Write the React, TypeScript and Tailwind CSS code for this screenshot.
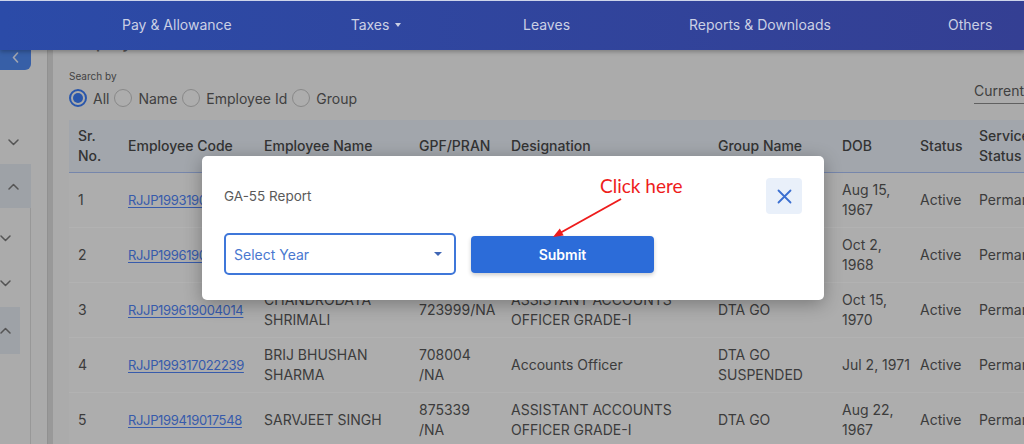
import React from "react";

type Row = {
  n: string;
  code: string;
  name: string[];
  gpf: string[];
  desig: string[];
  group: string[];
  dob: string[];
};

const rows: Row[] = [
  { n: "1", code: "RJJP199319006027", name: ["RAJENDRA", "PRASAD"], gpf: ["712345", "/NA"], desig: ["ACCOUNTS OFFICER"], group: ["DTA GO"], dob: ["Aug 15,", "1967"] },
  { n: "2", code: "RJJP199619003987", name: ["MAHESH", "KUMAR"], gpf: ["719902", "/NA"], desig: ["ACCOUNTS OFFICER"], group: ["DTA GO"], dob: ["Oct 2,", "1968"] },
  { n: "3", code: "RJJP199619004014", name: ["CHANDRODAYA", "SHRIMALI"], gpf: ["723999/NA"], desig: ["ASSISTANT ACCOUNTS", "OFFICER GRADE-I"], group: ["DTA GO"], dob: ["Oct 15,", "1970"] },
  { n: "4", code: "RJJP199317022239", name: ["BRIJ BHUSHAN", "SHARMA"], gpf: ["708004", "/NA"], desig: ["Accounts Officer"], group: ["DTA GO", "SUSPENDED"], dob: ["Jul 2, 1971"] },
  { n: "5", code: "RJJP199419017548", name: ["SARVJEET SINGH"], gpf: ["875339", "/NA"], desig: ["ASSISTANT ACCOUNTS", "OFFICER GRADE-I"], group: ["DTA GO"], dob: ["Aug 22,", "1967"] },
];

function Lines({ lines }: { lines: string[] }) {
  return (
    <div className="flex flex-col leading-[20px]">
      {lines.map((l, i) => (
        <span key={i} className="whitespace-nowrap">
          {l}
        </span>
      ))}
    </div>
  );
}

function ChevronDown() {
  return (
    <svg width="11" height="7" viewBox="0 0 11 7" fill="none">
      <path d="M1 1L5.5 5.5L10 1" stroke="#7a7a7a" strokeWidth="1.5" strokeLinecap="round" strokeLinejoin="round" />
    </svg>
  );
}
function ChevronUp() {
  return (
    <svg width="11" height="7" viewBox="0 0 11 7" fill="none">
      <path d="M1 6L5.5 1.5L10 6" stroke="#7a7a7a" strokeWidth="1.5" strokeLinecap="round" strokeLinejoin="round" />
    </svg>
  );
}

function Radio({ checked, label }: { checked?: boolean; label: string }) {
  return (
    <div className="flex items-center gap-[6px]">
      {checked ? (
        <span className="w-[18px] h-[18px] rounded-full border-2 border-[#3b7cf5] flex items-center justify-center">
          <span className="w-[10px] h-[10px] rounded-full bg-[#3b7cf5]" />
        </span>
      ) : (
        <span className="w-[18px] h-[18px] rounded-full border-[1.5px] border-[#c4c4c4] bg-[#f8f8f8]" />
      )}
      <span className="text-[14px] text-[#5c5c5c]">{label}</span>
    </div>
  );
}

const W = ["w-[49px]", "w-[136px]", "w-[155px]", "w-[92px]", "w-[207px]", "w-[124px]", "w-[78px]", "w-[59px]", "w-[120px]"];

export default function App() {
  return (
    <div className="relative w-[1024px] h-[444px] overflow-hidden bg-[#f5f5f5] font-[Inter,sans-serif]">
      {/* Page body */}
      <div className="flex h-full">
        {/* Sidebar */}
        <div className="w-[47px] shrink-0 flex flex-col">
          <div className="h-[40px]" />
          <div className="w-[31px] h-[30px] rounded-br-md rounded-tr-md bg-[#5089f0] flex items-center justify-center pt-[4px]">
            <svg width="7" height="11" viewBox="0 0 7 11" fill="none">
              <path d="M5.5 1L1.5 5.5L5.5 10" stroke="#e8eefc" strokeWidth="1.6" strokeLinecap="round" strokeLinejoin="round" />
            </svg>
          </div>
          <div className="h-[50px]" />
          <div className="h-[44px] flex items-center pl-[8px]">
            <ChevronDown />
          </div>
          <div className="h-[44px] w-[31px] bg-[#e3e8ef] flex items-center pl-[8px]">
            <ChevronUp />
          </div>
          <div className="flex-1 w-[31px] border-r border-[#dadada] flex flex-col">
            <div className="h-[8px]" />
            <div className="h-[44px] flex items-center">
              <ChevronDown />
            </div>
            <div className="h-[47px] flex items-center">
              <ChevronDown />
            </div>
            <div className="h-[47px] w-[20px] bg-[#e3e8ef] flex items-center">
              <ChevronUp />
            </div>
          </div>
        </div>
        <div className="w-[6px] shrink-0 bg-[#dcdcdc] border-l border-[#d0d0d0]" />

        {/* Content */}
        <div className="flex-1 min-w-0 overflow-hidden pl-[16px] pt-[30px]">
          <div className="h-[24px] leading-[24px] text-[18px] text-[#7a7a7a] font-medium">Employee List</div>
          <div className="flex items-start">
            <div className="flex flex-col">
              <div className="mt-[15px] text-[10px] leading-[14px] text-[#616161]">Search by</div>
              <div className="mt-[5px] h-[20px] flex items-center gap-[5px]">
                <Radio checked label="All" />
                <Radio label="Name" />
                <Radio label="Employee Id" />
                <Radio label="Group" />
              </div>
            </div>
            <div className="ml-auto -mr-[100px] w-[150px] shrink-0 mt-[28px] border-b-[1.5px] border-[#8a8a8a] pb-[3px] text-[14px] leading-[18px] text-[#5c5c5c] whitespace-nowrap">
              Current Employees
            </div>
          </div>

          {/* Table */}
          <div className="mt-[12px] w-[1020px]">
            <div className="flex h-[53px] items-center bg-[#e8eef7] border-b border-[#a9c1f5] text-[14px] font-medium text-[#4a4a4a] leading-[20px]">
              <div className={`${W[0]} pl-[9px]`}>
                <Lines lines={["Sr.", "No."]} />
              </div>
              <div className={`${W[1]} pl-[10px]`}>Employee Code</div>
              <div className={`${W[2]} pl-[10px]`}>Employee Name</div>
              <div className={`${W[3]} pl-[10px]`}>GPF/PRAN</div>
              <div className={`${W[4]} pl-[10px]`}>Designation</div>
              <div className={`${W[5]} pl-[10px]`}>Group Name</div>
              <div className={`${W[6]} pl-[10px]`}>DOB</div>
              <div className={`${W[7]} pl-[10px]`}>Status</div>
              <div className={`${W[8]} pl-[10px]`}>
                <Lines lines={["Service", "Status"]} />
              </div>
            </div>
            {rows.map((r) => (
              <div key={r.n} className="flex h-[55px] items-center bg-[#f8f8f8] border-b-[1.5px] border-white text-[14px] text-[#575757] leading-[20px]">
                <div className={`${W[0]} pl-[9px]`}>{r.n}</div>
                <div className={`${W[1]} pl-[10px]`}>
                  <span className="text-[#4f83f5] underline underline-offset-2 text-[13px] tracking-[-0.35px] whitespace-nowrap">{r.code}</span>
                </div>
                <div className={`${W[2]} pl-[10px]`}>
                  <Lines lines={r.name} />
                </div>
                <div className={`${W[3]} pl-[10px]`}>
                  <Lines lines={r.gpf} />
                </div>
                <div className={`${W[4]} pl-[10px]`}>
                  <Lines lines={r.desig} />
                </div>
                <div className={`${W[5]} pl-[10px]`}>
                  <Lines lines={r.group} />
                </div>
                <div className={`${W[6]} pl-[10px]`}>
                  <Lines lines={r.dob} />
                </div>
                <div className={`${W[7]} pl-[10px]`}>Active</div>
                <div className={`${W[8]} pl-[10px]`}>Permanent</div>
              </div>
            ))}
          </div>
        </div>
      </div>

      {/* Backdrop */}
      <div className="absolute inset-0 bg-black/30 z-10" />

      {/* Top nav (above backdrop) */}
      <div className="absolute top-0 left-0 right-0 h-[50px] z-20 bg-gradient-to-r from-[#2b4ba8] to-[#343f93] border-t border-[#cdd4ea] shadow-[0_2px_4px_rgba(0,0,0,0.25)] overflow-hidden">
        <div className="flex h-full items-center gap-[122px] text-[14px] text-[#cbd0e4] whitespace-nowrap pb-[2px]">
          <div className="w-[100px] -ml-[100px] text-right shrink-0">Masters</div>
          <div className="w-[107px] shrink-0 text-center">Pay &amp; Allowance</div>
          <div className="w-[50px] shrink-0 flex items-center justify-center gap-[6px]">
            <span>Taxes</span>
            <span className="w-0 h-0 border-l-[3.5px] border-r-[3.5px] border-t-[4px] border-l-transparent border-r-transparent border-t-[#cbd0e4]" />
          </div>
          <div className="w-[44px] shrink-0 text-center">Leaves</div>
          <div className="w-[137px] shrink-0 text-center">Reports &amp; Downloads</div>
          <div className="w-[42px] shrink-0 text-center">Others</div>
        </div>
      </div>

      {/* Modal */}
      <div className="absolute z-30 left-[202px] top-[156px] w-[622px] h-[144px] bg-white rounded-[5px] shadow-[0_4px_18px_rgba(0,0,0,0.3)] p-[22px] pb-[25px] flex flex-col">
        <div className="flex items-center justify-between h-[36px]">
          <span className="text-[13.5px] text-[#5a5a5a]">GA-55 Report</span>
          <button className="w-[36px] h-[36px] rounded-[4px] bg-[#e9f0fa] flex items-center justify-center">
            <svg width="15" height="15" viewBox="0 0 15 15" fill="none">
              <path d="M1.5 1.5L13.5 13.5M13.5 1.5L1.5 13.5" stroke="#3b6fd1" strokeWidth="1.8" strokeLinecap="round" />
            </svg>
          </button>
        </div>
        <div className="mt-[19px] flex items-center">
          <div className="w-[232px] h-[42px] border-2 border-[#3f77d9] rounded-[5px] flex items-center justify-between pl-[8px] pr-[12px]">
            <span className="text-[14px] text-[#4a78d0]">Select Year</span>
            <span className="w-0 h-0 border-l-[4px] border-r-[4px] border-t-[4px] border-l-transparent border-r-transparent border-t-[#3f66b5]" />
          </div>
          <button className="ml-[15px] w-[183px] h-[37px] rounded-[4px] bg-[#2c6cd9] text-white text-[14px] font-semibold shadow-[0_2px_4px_rgba(0,0,0,0.2)]">
            Submit
          </button>
        </div>
      </div>

      {/* Annotation */}
      <div className="absolute z-40 left-[600px] top-[176px] text-[19px] leading-[19px] text-[#ee1c1c] font-[Lato,sans-serif] whitespace-nowrap">
        Click here
      </div>
      <svg className="absolute z-40 left-[540px] top-[190px]" width="100" height="60" viewBox="0 0 100 60" fill="none">
        <line x1="81" y1="9" x2="20" y2="43" stroke="#ee1c1c" strokeWidth="2" />
        <polygon points="13,47 23.7,45.6 19.8,38.6" fill="#ee1c1c" />
      </svg>
    </div>
  );
}
